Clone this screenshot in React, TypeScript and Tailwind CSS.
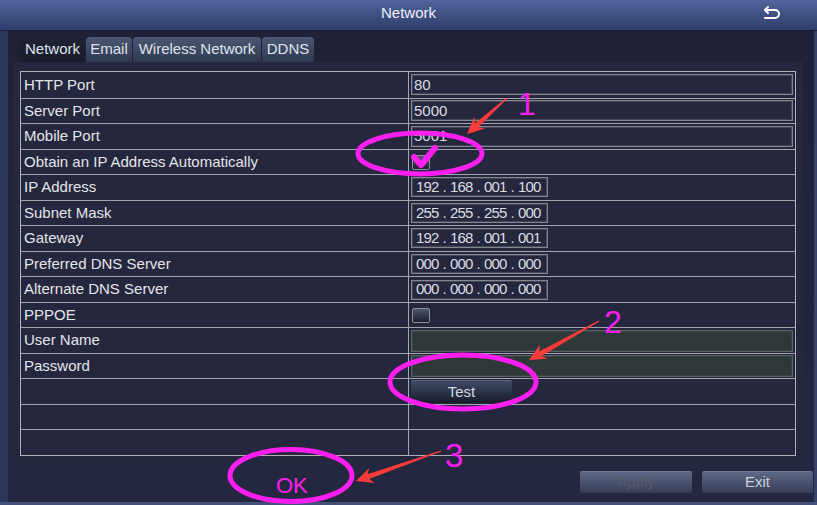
import React from "react";

type Row =
  | { label: string; kind: "wide"; value: string }
  | { label: string; kind: "check" }
  | { label: string; kind: "ip"; value: string[] }
  | { label: string; kind: "dim" }
  | { label: string; kind: "test" }
  | { label: string; kind: "empty" };

const rows: Row[] = [
  { label: "HTTP Port", kind: "wide", value: "80" },
  { label: "Server Port", kind: "wide", value: "5000" },
  { label: "Mobile Port", kind: "wide", value: "5001" },
  { label: "Obtain an IP Address Automatically", kind: "check" },
  { label: "IP Address", kind: "ip", value: ["192", "168", "001", "100"] },
  { label: "Subnet Mask", kind: "ip", value: ["255", "255", "255", "000"] },
  { label: "Gateway", kind: "ip", value: ["192", "168", "001", "001"] },
  { label: "Preferred DNS Server", kind: "ip", value: ["000", "000", "000", "000"] },
  { label: "Alternate DNS Server", kind: "ip", value: ["000", "000", "000", "000"] },
  { label: "PPPOE", kind: "check" },
  { label: "User Name", kind: "dim" },
  { label: "Password", kind: "dim" },
  { label: "", kind: "test" },
  { label: "", kind: "empty" },
  { label: "", kind: "empty" },
];

function arrowPoints(tx: number, ty: number, px: number, py: number) {
  const dx = px - tx;
  const dy = py - ty;
  const len = Math.hypot(dx, dy);
  const ux = dx / len;
  const uy = dy / len;
  const nx = -uy;
  const ny = ux;
  const headLen = 17;
  const headW = 8;
  const w0 = 0.6;
  const w1 = 2.6;
  const bx = px - ux * headLen;
  const by = py - uy * headLen;
  const nbx = px - ux * (headLen - 4);
  const nby = py - uy * (headLen - 4);
  const pts = [
    [tx + nx * w0, ty + ny * w0],
    [nbx + nx * w1, nby + ny * w1],
    [bx + nx * headW, by + ny * headW],
    [px, py],
    [bx - nx * headW, by - ny * headW],
    [nbx - nx * w1, nby - ny * w1],
    [tx - nx * w0, ty - ny * w0],
  ];
  return pts.map((p) => `${p[0].toFixed(1)},${p[1].toFixed(1)}`).join(" ");
}

function Checkbox() {
  return (
    <div className="w-[18px] h-[15px] rounded-[2px] border border-[#8e919c] bg-gradient-to-b from-[#4d566b] to-[#1c2131]" />
  );
}

function RightCell({ row }: { row: Row }) {
  if (row.kind === "wide") {
    return (
      <div className="h-[21px] w-full border border-[#84868f] shadow-[inset_0_0_0_1px_#44465a] flex items-center pl-[2px] text-[15px] text-[#dcdde2]">
        {row.value}
      </div>
    );
  }
  if (row.kind === "check") {
    return (
      <div className="pl-[1px] pt-[1px]">
        <Checkbox />
      </div>
    );
  }
  if (row.kind === "ip") {
    return (
      <div className="h-[20px] w-[137px] border border-[#84868f] shadow-[inset_0_0_0_1px_#44465a] flex items-center pl-[4px] text-[15px] text-[#dcdde2]">
        {row.value.map((seg, i) => (
          <React.Fragment key={i}>
            {i > 0 && <span className="w-[11px] text-center">.</span>}
            <span className="w-[23px] tracking-[-0.8px] whitespace-nowrap">{seg}</span>
          </React.Fragment>
        ))}
      </div>
    );
  }
  if (row.kind === "dim") {
    return (
      <div className="h-[22px] w-full border border-[#5c6262] bg-[#2f3838] shadow-[inset_0_0_0_1px_#3a4444]" />
    );
  }
  if (row.kind === "test") {
    return (
      <div className="h-[23px] w-[101px] rounded-[2px] bg-gradient-to-b from-[#3f4b66] to-[#171c2b] border-t border-[#56627e] flex items-center justify-center text-[15px] text-[#d4d8e0]">
        Test
      </div>
    );
  }
  return null;
}

export default function App() {
  const magenta = "#ff1ef0";
  const red = "#ff3a3a";
  return (
    <div
      className="relative w-[817px] h-[505px] overflow-hidden bg-[#20233a] flex flex-col"
      style={{ fontFamily: '"Liberation Sans", Arial, sans-serif' }}
    >
      {/* Title bar */}
      <div className="relative h-[31px] shrink-0 bg-gradient-to-b from-[#50659c] to-[#2d3d6c] border-b border-[#1a1e30] flex items-center justify-center pb-[4px]">
        <span className="text-[15px] text-[#eef0f6]">Network</span>
        <svg
          className="absolute left-[762px] top-[5px]"
          width="20"
          height="17"
          viewBox="0 0 20 17"
          fill="none"
          stroke="#ffffff"
          strokeWidth="2"
          strokeLinecap="round"
          strokeLinejoin="round"
        >
          <path d="M3 5 H13 A4 4 0 0 1 13 13 H3" />
          <path d="M6 2 L3 5 L6 8" />
        </svg>
      </div>

      {/* Body */}
      <div className="flex-1 flex flex-col border-l-[8px] border-l-[#2c3659] border-r-[3px] border-r-[#36426a] bg-gradient-to-b from-[#1f2236] to-[#232840]">
        {/* Tabs */}
        <div className="mt-[6px] ml-[12px] h-[25px] flex gap-[1px] text-[15px] text-[#dfe3ec]">
          <div className="w-[65px] rounded-t-[4px] bg-gradient-to-b from-[#1e2233] to-[#191c2b] flex items-center justify-center">
            Network
          </div>
          <div className="w-[46px] rounded-t-[4px] bg-gradient-to-b from-[#4c5773] to-[#2f3850] flex items-center justify-center">
            Email
          </div>
          <div className="w-[128px] rounded-t-[4px] bg-gradient-to-b from-[#4c5773] to-[#2f3850] flex items-center justify-center">
            Wireless Network
          </div>
          <div className="w-[52px] rounded-t-[4px] bg-gradient-to-b from-[#4c5773] to-[#2f3850] flex items-center justify-center">
            DDNS
          </div>
        </div>

        {/* Panel */}
        <div className="ml-[5px] w-[790px] h-[398px] bg-[#24273d] pl-[7px] pt-[9px]">
          <div className="w-[776px] h-[385px] border border-[#aeafb8] grid grid-rows-[repeat(15,minmax(0,1fr))]">
            {rows.map((row, i) => (
              <div
                key={i}
                className={`flex ${i > 0 ? "border-t border-[#a3a4ae]" : ""}`}
              >
                <div className="w-[388px] shrink-0 border-r border-[#a3a4ae] flex items-center pl-[3px] text-[15px] text-[#e4e5ea] whitespace-nowrap">
                  {row.label}
                </div>
                <div className="flex-1 flex items-center pl-[2px] pr-[2px]">
                  <RightCell row={row} />
                </div>
              </div>
            ))}
          </div>
        </div>

        {/* Footer */}
        <div className="flex justify-end gap-[10px] pt-[11px] pr-[1px]">
          <div className="w-[112px] h-[22px] rounded-[2px] bg-gradient-to-b from-[#5f6886] to-[#363d58] border-t border-[#707a96] flex items-center justify-center text-[15px] text-[#545a6a]">
            Apply
          </div>
          <div className="w-[111px] h-[22px] rounded-[2px] bg-gradient-to-b from-[#5f6886] to-[#363d58] border-t border-[#707a96] flex items-center justify-center text-[15px] text-[#cdd0d8]">
            Exit
          </div>
        </div>
      </div>
      <div className="h-[3px] shrink-0 bg-[#44507a]" />

      {/* Annotations overlay */}
      <svg
        className="absolute left-0 top-0 pointer-events-none"
        width="817"
        height="505"
        viewBox="0 0 817 505"
      >
        <ellipse cx="420" cy="153.5" rx="62" ry="20.5" fill="none" stroke={magenta} strokeWidth="5" />
        <path
          d="M414 157 L421 165 L435 148"
          fill="none"
          stroke={magenta}
          strokeWidth="6"
          strokeLinecap="round"
          strokeLinejoin="round"
        />
        <polygon points={arrowPoints(507, 98, 467, 134)} fill={red} />
        <text x="518" y="115" fontSize="32" fill={magenta} fontFamily="Liberation Sans, Arial, sans-serif">
          1
        </text>

        <ellipse cx="463" cy="382" rx="73" ry="27" fill="none" stroke={magenta} strokeWidth="5" />
        <polygon points={arrowPoints(599, 321, 529, 360)} fill={red} />
        <text x="604" y="333" fontSize="32" fill={magenta} fontFamily="Liberation Sans, Arial, sans-serif">
          2
        </text>

        <ellipse cx="291" cy="475.5" rx="61" ry="26" fill="none" stroke={magenta} strokeWidth="5" />
        <polygon points={arrowPoints(441, 451, 356, 481)} fill={red} />
        <text x="445" y="467" fontSize="33" fill={magenta} fontFamily="Liberation Sans, Arial, sans-serif">
          3
        </text>
        <text x="276" y="493" fontSize="22" fill={magenta} fontFamily="Liberation Sans, Arial, sans-serif">
          OK
        </text>
      </svg>
    </div>
  );
}
